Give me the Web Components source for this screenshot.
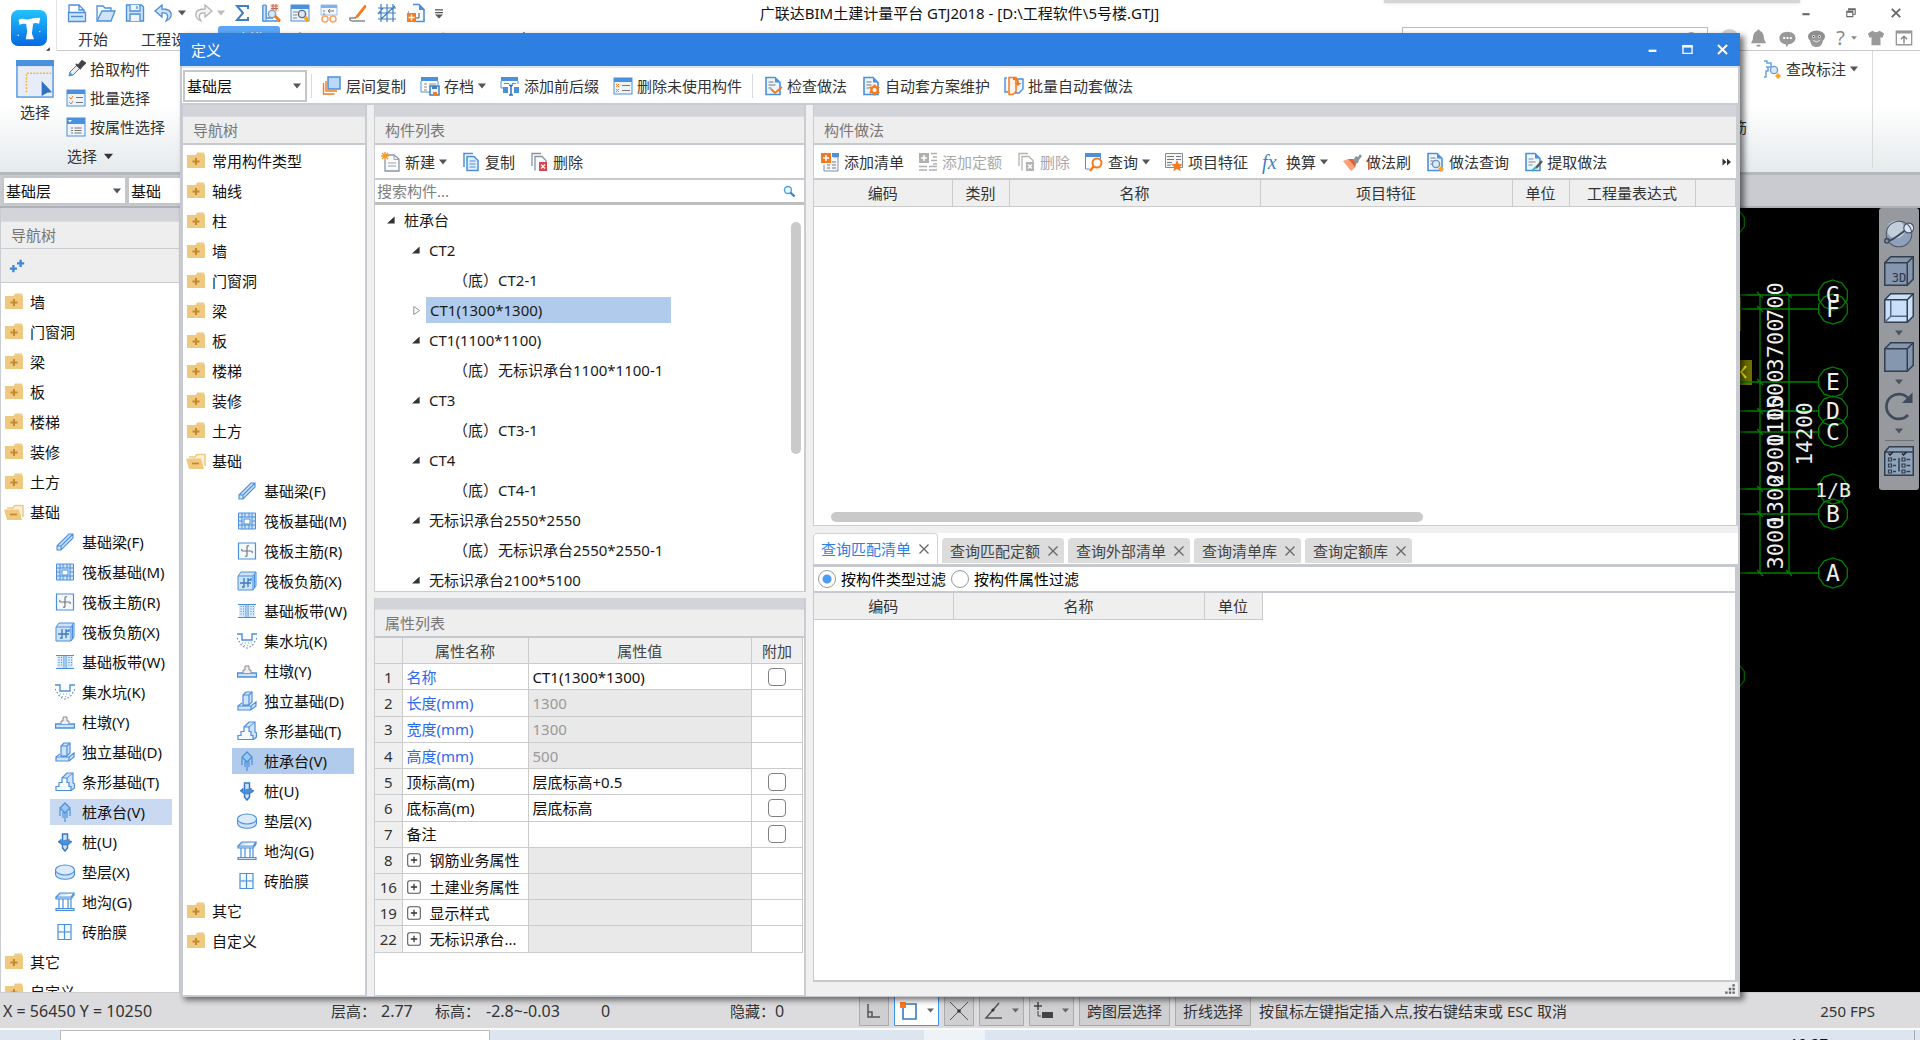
<!DOCTYPE html>
<html lang="zh-CN">
<head>
<meta charset="utf-8">
<title>广联达BIM土建计量平台 GTJ2018</title>
<style>
html,body{margin:0;height:100%;overflow:hidden}
body{font:15px/20px "Noto Sans","Noto Sans CJK SC",sans-serif;color:#1a1a1a;background:#fff}
</style>
</head>
<body>
<gt-app></gt-app>
<script>
const B='#4a90dc', L='#cfe2f8', O='#f47b20';
const doc=`<path d="M3 1.5h9l5 5v12H3z" fill="#eef5fd" stroke="${B}" stroke-width="1.6"/><path d="M12 1.5v5h5z" fill="${B}"/>`;
const win=`<rect x="1" y="2" width="18" height="16" fill="#eef3f9" stroke="${B}"/><rect x="1" y="2" width="18" height="4" fill="${B}"/>`;
const gem=`<path d="M16 14l3 3-3 3-3-3z" fill="#ffa31a"/>`;
const lens=(c,x=11,y=11)=>`<circle cx="${x}" cy="${y}" r="3.6" fill="#dbe9fa" stroke="${c}" stroke-width="1.4"/>`;
const cube=`<path d="M.5 4.500l4-4h15v15l-4 4H.5z" fill="#8497af" stroke="#333d4c" stroke-width="1"/><path d="M.5 4.500h15v15M15.500 4.500l4-4" fill="none" stroke="#333d4c"/>`;
const I={
new:`<path d="M2 9V2h10l5 5v2M12 2v5h5" fill="none" stroke="${B}" stroke-width="1.3"/><path d="M1.5 9.5h17v9h-17z" fill="${L}" stroke="${B}" stroke-width="1.3"/><path d="M4 13.500h12" stroke="${B}" stroke-width="1.4"/>`,
open:`<path d="M1 17V3h6l2 2h6v3" fill="none" stroke="${B}" stroke-width="1.3"/><path d="M1 18L6 8h13l-4 10z" fill="${L}" stroke="${B}" stroke-width="1.3"/>`,
save:`<path d="M1.500 2h15l2 2v14h-17z" fill="${L}" stroke="${B}" stroke-width="1.4"/><path d="M5 2v6h10V2M5 18v-7h10v7M12 3v3" fill="#eef5fd" stroke="${B}" stroke-width="1.3"/>`,
undo:`<path d="M8 2L1 8l7 6v-4c6-1 7 3 4 8 7-3 8-12-4-12z" fill="${L}" stroke="${B}" stroke-width="1.3"/>`,
redo:`<path d="M12 2l7 6-7 6v-4c-6-1-7 3-4 8-7-3-8-12 4-12z" fill="#f4f4f4" stroke="#b4b4b4" stroke-width="1.3"/>`,
sigma:`<path d="M16 6V3H5l6 7-6 7h11v-3" fill="none" stroke="#3f7fc4" stroke-width="2"/>`,
chart:`<path d="M2 2v16h17M5 2v13h7" fill="none" stroke="${B}" stroke-width="1.4"/><path d="M2 2h3v16H2z" fill="${L}" stroke="${B}"/><path d="M9 1h9v8H9z" fill="#fbe3d8"/><path d="M10 3h7M10 5.500h7M12 1v7M15 1v7" stroke="#c46a4c"/>${lens('#7c9cc4',11,11)}<path d="M14 13l5 5" stroke="${O}" stroke-width="3"/>`,
winfind:win+`<path d="M3 9h5M3 12h4M3 15h4" stroke="#888"/>${lens('#667',12,11)}<path d="M15 14l3 4" stroke="#ffa31a" stroke-width="3.500"/>`,
winback:`<path d="M2 2h16v10H2z" fill="#f3f6fa" stroke="#9cc0ea"/><path d="M2 2h16v3H2z" fill="#7fb2ec"/><path d="M4 8h2M4 11h2M15 8h-6m2-2L9 8l2 2" stroke="#777" fill="none"/><circle cx="6" cy="16" r="3" fill="#fff" stroke="#f9a46a" stroke-width="1.600"/><circle cx="14" cy="16" r="3" fill="#fff" stroke="#f9a46a" stroke-width="1.600"/>`,
pen:`<path d="M17 2L9 12l-2 3 3-1L18 4z" fill="${O}" stroke="${O}"/><path d="M8 15H2c-1 2 1 3 3 3h12" fill="none" stroke="#888" stroke-width="1.600"/>`,
grid:`<path d="M4 1v18M10 1v18M16 1v18M1 5h18M1 10h18M1 16h18M4 16L18 3M1 11l5-6" fill="none" stroke="#3f7fc4" stroke-width="1.200"/>`,
docadd:`<path d="M7 1.500h6l5 5v12H8" fill="#f8fafd" stroke="${B}" stroke-width="1.600"/><path d="M13 1v6h6z" fill="${B}"/><path d="M2 9h1M10 15h3v-5" stroke="#555" fill="none"/><path d="M1 10h9v9H1z" fill="${O}"/><path d="M5.500 11.500v6M2.500 14.500h6" stroke="#fff" stroke-width="1.500"/>`,
more:`<path d="M5 6h10M5 9.500h10" stroke="#555" stroke-width="1.500"/><path d="M5 12h10l-5 5z" fill="#555"/>`,
logo:`<defs><linearGradient id="g" x1="0" y1="0" x2="0" y2="1"><stop offset="0" stop-color="#22c3ff"/><stop offset="1" stop-color="#0668e0"/></linearGradient></defs><rect width="20" height="20" rx="4" fill="url(#g)"/><path d="M4.200 5.500C6 4 8 5.500 10 5.200S14 4 16.200 4.500l-.6 3.200c-1.500-.7-2.500-.6-3.300-.2L11.600 13l1.200 3.200H8.200L9 12l-.6-4.300c-1.500-.3-2.800 0-3.600.6z" fill="#fff"/><circle cx="4" cy="14" r=".4" fill="#fff"/><circle cx="16" cy="12" r=".4" fill="#fff"/>`,
selectbig:`<rect x=".5" y=".5" width="19" height="19" fill="#e6ecf8" stroke="${B}" stroke-width=".7"/><rect width="20" height="3.200" fill="${B}"/><path d="M5.500 17V7h13" fill="none" stroke="#f6b52c" stroke-dasharray="1 .7" stroke-width=".8"/><path d="M13.500 11l5.500 6-2.600.200L13.500 19z" fill="#2f6fc4"/>`,
dropper:`<path d="M3 17l1-4 7-7 3 3-7 7z" fill="#e8eef6" stroke="#777"/><path d="M3 17l1-4 3 3z" fill="#4aa3ef"/><path d="M10 5l5 5M12 7l4-5 3 2-5 5z" stroke="#444" stroke-width="2" fill="#444"/>`,
checklist:win+`<path d="M3 9l2 2 2-3M3 14l2 2 2-3" fill="none" stroke="${O}"/><path d="M10 9.500h7M10 14.500h7" stroke="#777"/>`,
proplist:`<rect x="1" y="1" width="18" height="18" fill="#eef3f9" stroke="${B}"/><path d="M1 1h18v6H1z" fill="${B}"/><path d="M2 3h4l-2 2.500z" fill="#fff"/><path d="M5 11h2M5 13.500h2M5 16h2M8.500 11h7M8.500 13.500h7M8.500 16h7" stroke="#777"/>`,
copyfloor:`<path d="M6 1h12v12H6z" fill="#b9d8fb" stroke="${B}" stroke-width="1.500"/><path d="M4 5v10h11M1.500 7v11h11" fill="none" stroke="${O}" stroke-width="1.400"/>`,
archive:`<path d="M1 1h17v4H1z" fill="${B}"/><path d="M1 5v11h9M18 5v4" fill="none" stroke="${B}"/><path d="M4 8h3M4 11h3M4 14h3M9 8h7" stroke="#888"/><path d="M10 10h9v9h-9z" fill="#eef5fd" stroke="#3f7fc4" stroke-width="1.500"/><path d="M12 10h5v3h-5z" fill="#3f7fc4"/><path d="M13 16h4v3h-4z" fill="${O}"/>`,
affix:`<path d="M1 1h17v4H1z" fill="${B}"/><path d="M1 5v7h4M18 5v3" stroke="${B}" fill="none"/><path d="M4 7.500h5M12 7.500h4" stroke="#888"/><path d="M3 11h5v6H3zM14 11h5v6h-5z" fill="${B}"/><path d="M9 9q2 0 2 2v7q0 1-2 1M13 9q-2 0-2 2v7q0 1 2 1" stroke="#2f6fc4" stroke-width="1.500" fill="none"/>`,
unused:win+`<path d="M3 8l3 3m0-3l-3 3M3 13l3 3m0-3l-3 3" stroke="${O}"/><path d="M9 9.500h8M9 14.500h8" stroke="#777"/>`,
doccheck:doc+`<path d="M5.500 6h5M5.500 9h7M5.500 12h3" stroke="#777"/><path d="M8 13l4 4 7-6" fill="none" stroke="${O}" stroke-width="2"/>`,
docgear:doc+`<path d="M5.500 6h5M5.500 9h5M5.500 12h3" stroke="#777"/><circle cx="13.500" cy="14" r="3.200" fill="#fff" stroke="${O}" stroke-width="2.400"/><path d="M13.500 8.500v2M13.500 17.500v2M8.700 11l1.800 1.200M16.500 15.800l1.800 1.200M8.700 17l1.800-1.200M16.500 12.200l1.800-1.200" stroke="${O}" stroke-width="2"/>`,
batch:`<path d="M3 2H1v14h3M12 3h7v10l-4 4h-4" fill="#eef5fd" stroke="${B}" stroke-width="1.400"/><path d="M5 1.500h7v14l-3 3H5z" fill="#fff3ea" stroke="${O}" stroke-width="1.500"/><path d="M9 2c5-1 6 2 6 5h2.500L14 10l-3.500-3H13c0-2-1-3-4-3z" fill="${O}"/>`,
newdoc:`<path d="M5 3h8l5 4v12H4V8" fill="#fafafa" stroke="#8a97a5" stroke-width="1.300"/><path d="M13 3v4.500h5M7 11h8M7 14h8" fill="none" stroke="#9aa5b0"/><path d="M4 0v8M0 4h8M1 1l6 6M7 1L1 7" stroke="#f39a2c" stroke-width="1.400"/>`,
copy:`<path d="M3 15V1.500h9" fill="none" stroke="${B}" stroke-width="1.500"/><path d="M6 4.500h7l4 4v10H6z" fill="#e2eefb" stroke="${B}" stroke-width="1.500"/><path d="M8.500 9h6M8.500 12h6M8.500 15h6" stroke="${B}"/>`,
del:`<path d="M3 14V1.500h9M6 18.500v-14h7l4 4v2" fill="none" stroke="#8493a3" stroke-width="1.300"/><path d="M10 10h8v9h-8z" fill="#d9474b"/><path d="M12 12.500l4 4m0-4l-4 4" stroke="#fff" stroke-width="1.300"/>`,
delg:`<path d="M3 14V1.500h9M6 18.500v-14h7l4 4v2" fill="none" stroke="#b3b3b3" stroke-width="1.300"/><path d="M10 10h8v9h-8z" fill="#b3b3b3"/><path d="M12 12.500l4 4m0-4l-4 4" stroke="#fff" stroke-width="1.300"/>`,
addlist:`<path d="M12 1h7v4h-7z" fill="${B}"/><path d="M13 5h5v14H4v-6" fill="#f4f7fb" stroke="#7d93ac"/><path d="M7 13h3M7 16h3M12 10h4M12 13h4M12 16h4" stroke="#777"/><path d="M1 1h10v10H1z" fill="${O}"/><path d="M6 3v6M3 6h6" stroke="#fff" stroke-width="1.500"/>`,
addgray:`<path d="M1 1h10v10H1z" fill="#b0b0b0"/><path d="M6 3v6M3 6h6" stroke="#fff" stroke-width="1.500"/><path d="M13 1.500h6M15 5h4M13 8.500h6M15 12h4M1 14.500h8M1 18h8M11 14.500h8M11 18h8" stroke="#b0b0b0" stroke-width="1.300"/>`,
query:`<path d="M1 1h16v4H1z" fill="${B}"/><path d="M1.500 5v12h4M16.500 5v2" stroke="${B}" fill="none"/><circle cx="13" cy="11" r="4.500" fill="#fff" stroke="${O}" stroke-width="2"/><path d="M9.500 14.500L6 19" stroke="${O}" stroke-width="2.500"/>`,
feature:`<path d="M1.500 1.500h17v14h-17z" fill="#f4f6f8" stroke="#7e8b98"/><path d="M3 4.500h7M3 7.500h7M3 10.500h5M3 13h4M12 4.500h5M12 7.500h5" stroke="#777"/><path d="M13 8l1.700 4 4.300.300-3.300 2.800 1 4.200L13 17l-3.700 2.300 1-4.200L7 12.300l4.300-.3z" fill="${O}"/>`,
brush:`<path d="M11 8l3-4 2 1 2-3 2 2-3 4-1 3-3 1z" fill="#8c979f"/><path d="M1 9l5-2 8 8-5 4z" fill="#fba07a"/><path d="M6 7l5 0 3 5-1 3z" fill="#e06433"/>`,
docfind:doc+`<path d="M5.500 6h5M5.500 9h3M5.500 12h2" stroke="#777"/>${lens('#6f8fb8',11,12)}`+gem,
docpen:doc+`<path d="M5.500 7h5M5.500 10h7M5.500 13h4" stroke="#888"/><path d="M19 9l-6 7" stroke="#555" stroke-width="2.400"/><path d="M13 15l-4 4" stroke="#31b6c9" stroke-width="2"/>`,
annot:`<path d="M2 2h3v2h4v4H6v4H4v6H2M6 8H4" fill="none" stroke="#6aa3e4" stroke-width="1.500"/>${lens('#7299cc',12,11)}`+gem,
search:`<circle cx="8.500" cy="8.500" r="5" fill="#eaf6fd" stroke="#4ba3dc" stroke-width="2"/><path d="M12 12l6 6" stroke="#2c86c8" stroke-width="3"/>`,
sgray:`<circle cx="9" cy="8" r="6" fill="none" stroke="#aaa" stroke-width="1.500"/>`,
ball:`<circle cx="10" cy="10" r="10" fill="#d2d2d2"/>`,
bell:`<path d="M8.500 2a1.500 1.500 0 013 0c4 1 4 6 4.500 9l2 4H2l2-4c.5-3 .5-8 4.500-9zM8 16.500h4v2H8z" fill="#999"/>`,
chat:`<path d="M10 3c5 0 8.500 3 8.500 6.500S15 16 11 16l-2 3-1-3c-4-.5-6.500-3-6.500-6.500S5 3 10 3z" fill="#999"/><path d="M5.500 9.500h2M9 9.500h2M12.500 9.500h2" stroke="#fff" stroke-width="2"/>`,
face:`<ellipse cx="10" cy="8" rx="9" ry="6.500" fill="#8f8f8f"/><ellipse cx="10" cy="13" rx="6.500" ry="6" fill="#999"/><circle cx="7" cy="8" r="1.600" fill="#e8e8e8"/><circle cx="13" cy="8" r="1.600" fill="#e8e8e8"/><path d="M6.500 12q3.500 3 7 0" stroke="#eee" fill="none"/><circle cx="7" cy="8" r=".7"/><circle cx="13" cy="8" r=".7"/>`,
shirt:`<path d="M6 2q4 3 8 0l5 3-2 5-2-1v9H5V9l-2 1-2-5z" fill="#999"/>`,
expand:`<path d="M1.500 2.500h17v15h-17z" fill="#fff" stroke="#999" stroke-width="1.500"/><path d="M1 2h18v3H1z" fill="#999"/><path d="M10 16V9M6.500 11.500L10 8l3.500 3.500" stroke="#888" stroke-width="1.600" fill="none"/>`,
plus2:`<path d="M6 9v8M2 13h8M14 3v8M10 7h8" stroke="#3f87dc" stroke-width="2.600"/>`,
folder:`<path d="M10 3l1-1.500h7L18.500 3v2H10z" fill="#efcb85"/><path d="M1 4h18v13H1z" fill="#efc980"/><path d="M10 7v7M6.500 10.500h7" stroke="#c48a2c" stroke-width="2"/>`,
folderopen:`<path d="M3 6h6l2-2.500h8V15" fill="#fbf0d8" stroke="#efc980" stroke-width="1.500"/><path d="M0 7.500h15L18 18H3z" fill="#efc980"/><path d="M6 12.500h7" stroke="#c48a2c" stroke-width="1.700"/>`,
beam:`<path d="M2 14L14 2h4v4L6 18H2zM2 14h4v4M6 14L18 2" fill="${L}" stroke="${B}" stroke-width="1.100"/>`,
raft:`<path d="M1.500 2h17v16h-17z" fill="${L}" stroke="${B}"/><path d="M5 2v16M15 2v16M1 6h18M1 14h18M8 2v4M12 2v4M8 14v4M12 14v4M1 10h4M15 10h4" stroke="${B}"/><path d="M7 8h6v5H7z" fill="#fff" stroke="${B}"/>`,
rebar:`<path d="M1.500 2h17v16h-17z" fill="#f3f9ff" stroke="${B}" stroke-width="1.200"/><path d="M12 5q-2-1-2 1v8q0 2-2 1M5 8q-1 2 1 2h8q2 0 1 2" fill="none" stroke="#777" stroke-width="1.200"/>`,
rebarx:`<path d="M1 5l3-4h15v14l-3 4H1z" fill="${L}" stroke="${B}"/><path d="M1.500 5H16v14M16 5l3-4M17.500 3v14" fill="none" stroke="${B}"/><path d="M7 7v9H5M11 7v9M3 12h11M11 9h3v-2" stroke="#3a79c4" fill="none" stroke-width="1.300"/>`,
strip:`<path d="M2 3h7v14H2zM11 3h7v14h-7z" fill="#d6e8fb"/><path d="M1 3.500h18M1 16.500h18M9 3v14M11 3v14" stroke="${B}"/><path d="M4 5v10M6.500 5v10M14 5v10M16.500 5v10" stroke="${B}" stroke-dasharray="1 1.500"/>`,
pit:`<path d="M0 3h5v6h10V3h5" fill="none" stroke="${B}" stroke-width="1.400"/><path d="M0 7l5 8 5 2 5-2 5-8" fill="none" stroke="#5d86b5" stroke-dasharray="1.500 2" stroke-width="1.200"/><path d="M5 12h10M7 14.500h6" stroke="#8ab" stroke-dasharray="1 2"/>`,
pier:`<path d="M.5 12h19v4H.5z" fill="${L}" stroke="${B}" stroke-width="1.300"/><path d="M6 12V9h2V5h4v4h2v3" fill="#eee" stroke="#888"/>`,
found:`<path d="M1 15h13l5-4v4l-5 4H1zM6 14V4l3-3h6v10l-3 3z" fill="${L}" stroke="${B}" stroke-width="1.200"/><path d="M1 15l4-3M6 4h6v10M12 4l3-3M14 15v4" fill="none" stroke="${B}" stroke-width="1.200"/>`,
stripf:`<path d="M7 6l5-5h6v10l1.500 1v4l-4 3" fill="${L}" stroke="${B}" stroke-width="1.200"/><path d="M1 18.500v-4h3v-4h3V6h5v4.500h2v4h2v4z" fill="#f5faff" stroke="${B}" stroke-width="1.200"/><path d="M12 6l6-5" stroke="${B}"/>`,
cap:`<path d="M10 1l5 5-5 5-5-5z" fill="#9cc8f4" stroke="${B}" stroke-width="1.300"/><path d="M5 7v7M15 7v7M8 10v6M12 10v6M10 11v9" stroke="${B}" stroke-width="1.200"/>`,
pile:`<path d="M7.500 2h5v14L10 19l-2.500-3z" fill="${L}" stroke="#3a79c4" stroke-width="1.500"/><path d="M3 9.500q2 3 7 3.500 5-.5 7-3.500l-3-.5v-2M3 9.500L6 9V7" fill="${B}" stroke="#3a79c4"/>`,
pad:`<path d="M.5 8v4c0 7 19 7 19 0V8" fill="${L}" stroke="${B}" stroke-width="1.100"/><ellipse cx="10" cy="8" rx="9.500" ry="5" fill="#dcebfb" stroke="${B}" stroke-width="1.100"/>`,
trench:`<path d="M1 5l4-4h14l-3 4zM1 5v2h15l3-4V1M4 7v10M8 7v10M13 7v10M16 7v10M1 16.500h18v2H1z" fill="${L}" stroke="${B}" stroke-width="1.200"/>`,
brick:`<path d="M3 2.500h13v15H3zM9.500 2.500v15M3 10h13" fill="#f3f9ff" stroke="${B}" stroke-width="1.200"/><path d="M6 10v-1M13 10v-1" stroke="${B}"/>`,
corner:`<path d="M4 3v13h12M4 11h4v5" fill="none" stroke="#555" stroke-width="1.500"/>`,
rect:`<path d="M4 3h13v15H4z" fill="#fff" stroke="#3a79c4" stroke-width="1.600"/><path d="M1 1h6v6H1z" fill="#ff7a1a"/>`,
cross:`<path d="M1 1l18 18M19 1L1 19" stroke="#555"/><circle cx="10" cy="10" r="1.800" fill="#333"/>`,
angle:`<path d="M15 2L2 17h16" fill="none" stroke="#555" stroke-width="1.500"/><circle cx="9" cy="9" r="1.600" fill="#333"/>`,
ptadd:`<path d="M4 1v8M0 5h8" stroke="#444" stroke-width="1.500"/><path d="M4 10v5h3" stroke="#444" fill="none"/><path d="M8 11h11v6H8z" fill="#444"/>`,
planet:`<circle cx="10" cy="10" r="8.500" fill="#8ea1b8"/><circle cx="8" cy="7" r="6" fill="#cfd9e4" opacity=".8"/><path d="M.5 15q2 1 9-4t9-8" fill="none" stroke="#3c4757" stroke-width="1.300"/><circle cx="16.500" cy="6" r="3.300" fill="#dde6ef" stroke="#4c596b" stroke-width=".8"/><circle cx="2" cy="14.500" r="1.500" fill="#8ea1b8" stroke="#3c4757"/><circle cx="10" cy="10" r="8.500" fill="none" stroke="#4c596b" stroke-width=".7"/>`,
cube,
cube3d:cube+`<text x="10" y="17.500" font-size="8" text-anchor="middle" font-family="DejaVu Sans Mono,monospace" fill="#2d3644">3D</text>`,
cubewire:`<path d="M.5 4.500l4-4h15v15l-4 4H.5z" fill="#c9e0fa" stroke="#333d4c"/><path d="M4.500 5v10.500H16M.5 19.500l4-4" fill="none" stroke="#5a6a80"/><path d="M.5 4.500h15v15M15.500 4.500l4-4" fill="none" stroke="#333d4c"/>`,
rotate:`<path d="M17 6A8.300 8.300 0 1016 16" fill="none" stroke="#3f4a5a" stroke-width="1.800"/><path d="M19 1v7h-7z" fill="#3f4a5a"/>`,
panel:`<path d="M.5 4l3-3.500h16v19H.5z" fill="#8fa3bb" stroke="#333d4c"/><path d="M.5 4h19" stroke="#333d4c"/><path d="M10 8v9" stroke="#333d4c"/><path d="M3 8h2v2H3zM3 12h2v2H3zM3 16h2v2H3zM12 8h2v2h-2zM12 12h2v2h-2zM12 16h2v2h-2z" fill="none" stroke="#333d4c" stroke-width=".8"/><path d="M6 9h2M6 13h2M6 17h2M15 9h2.500M15 13h2.500M15 17h2.500" stroke="#333d4c"/><path d="M3 5l1 1 2-2M12 5l1 1 2-2" fill="none" stroke="#222"/>`,
min:`<path d="M4 12h12" stroke="currentColor" stroke-width="3.500"/>`,
max:`<path d="M3 5h14v11H3z" fill="none" stroke="currentColor" stroke-width="2"/><path d="M2 5h16" stroke="currentColor" stroke-width="4"/>`,
restore:`<path d="M6 6V3h11v9h-4M3 7h10v9H3zM3 8.500h10M6 4.500h11" fill="none" stroke="currentColor" stroke-width="1.800"/>`,
close:`<path d="M3 3l14 14M17 3L3 17" stroke="currentColor" stroke-width="3"/>`,
x:`<path d="M1 1l18 18M19 1L1 19" stroke="currentColor" stroke-width="2.600"/>`,
caret:`<path d="M0 4h20L10 16z" fill="currentColor"/>`,
open3:`<path d="M19 1v18H0z" fill="#333"/>`,
shut3:`<path d="M4 1l13 9L4 19z" fill="#fff" stroke="#888" stroke-width="2"/>`,
plusbox:`<rect x="1" y="1" width="18" height="18" rx="3" fill="#fff" stroke="#555" stroke-width="1.500"/><path d="M10 5.500v9M5.500 10h9" stroke="#333" stroke-width="1.800"/>`,
grip:`<path d="M14 2h4v4h-4zM14 8h4v4h-4zM8 8h4v4H8zM14 14h4v4h-4zM8 14h4v4H8zM2 14h4v4H2z" fill="#666"/>`,
chev:`<path d="M1 3l8 7-8 7zM10 3l8 7-8 7z" fill="#333"/>`
};
const def=(n,css,html)=>customElements.define(n,class extends HTMLElement{
 constructor(){super();this.attachShadow({mode:'open'})}
 connectedCallback(){this.shadowRoot.innerHTML=`<style>*{box-sizing:border-box}button,input,select{font:inherit;color:inherit}${css}</style>`+(typeof html==='function'?html(this):html)}
});
const ic=(n,s=20,c='')=>`<gt-icon name="${n}" size="${s}" class="${c}"></gt-icon>`;

def('gt-icon',':host{display:block;flex:none}svg{display:block}',h=>{const s=h.getAttribute('size')||20;
 return `<svg width="${s}" height="${s}" viewBox="0 0 20 20" aria-hidden="true">${I[h.getAttribute('name')]||''}</svg>`});

/* icon + label command button */
def('gt-tool',`:host{display:block;flex:none}button{display:flex;align-items:center;gap:4px;height:26px;padding:0 6px;border:0;background:none;white-space:nowrap}
button:disabled{color:#a9a9a9}.fx{width:20px;font:italic 20px/20px "Liberation Serif",serif;color:#3f7fc4;text-align:left}gt-icon.c{color:#555}`,h=>{const i=h.getAttribute('icon');
 return `<button ${h.hasAttribute('off')?'disabled':''}>${i==='fx'?'<span class="fx">fx</span>':ic(i)}<slot></slot>${h.hasAttribute('caret')?ic('caret',8,'c'):''}</button>`});
def('gt-toolbar',':host{display:flex;align-items:center;gap:2px;background:#fff;overflow:hidden;color:#333}','<slot></slot>');

def('gt-combo',`:host{display:block;position:relative;color:#111}select{appearance:none;width:100%;height:100%;border:2px solid #c3c6ca;border-radius:0;background:#fff;padding:0 2px}
gt-icon{position:absolute;right:6px;top:50%;margin-top:-4px;color:#555;pointer-events:none}`,h=>`<select aria-label="${h.getAttribute('label')}"><option>${h.getAttribute('value')}</option></select>${ic('caret',8)}`);

/* docked panel: drag strip, caption, content */
def('gt-panel',`:host{display:flex;flex-direction:column;min-width:0;min-height:0;background:#fff;border:1px solid #c9ccd1;border-width:0 2px 1px 1px}
.strip{height:11px;background:#d2d4da;flex:none}.cap{height:29px;flex:none;background:#eee;border-top:1px solid #dcdde0;border-bottom:2px solid #c6c9cd;padding:3px 10px;color:#777}`,
h=>`<div class="strip"></div><div class="cap">${h.getAttribute('caption')}</div><slot></slot>`);

const kids=[['beam','基础梁(F)'],['raft','筏板基础(M)'],['rebar','筏板主筋(R)'],['rebarx','筏板负筋(X)'],['strip','基础板带(W)'],['pit','集水坑(K)'],['pier','柱墩(Y)'],['found','独立基础(D)'],['stripf','条形基础(T)'],['cap','桩承台(V)'],['pile','桩(U)'],['pad','垫层(X)'],['trench','地沟(G)'],['brick','砖胎膜']];
def('gt-nav',`:host{display:block;flex:1;min-height:0;overflow:hidden;background:#fff;color:#111}ul{list-style:none;margin:0;padding:1px 0 0;display:flex;flex-direction:column}
.f{display:flex;align-items:center;height:30px;padding-left:3px;gap:6px}.k{display:flex;align-items:center;height:26px;margin:2px 0 2px 49px;width:122px;padding-left:5px;gap:7px;white-space:nowrap}.k.on{background:var(--sel,#b1cbec)}`,
h=>{const all=['常用构件类型','轴线','柱','墙','门窗洞','梁','板','楼梯','装修','土方'];const top=all.slice(+h.getAttribute('from')||0);
const f=(t,i='folder')=>`<li class="f">${ic(i)}<span>${t}</span></li>`;
return `<ul>${top.map(t=>f(t)).join('')}${f('基础','folderopen')}${kids.map(([i,t])=>`<li class="k ${i==='cap'?'on':''}">${ic(i)}<span>${t}</span></li>`).join('')}${f('其它')}${f('自定义')}</ul>`});

def('gt-members',`:host{display:flex;flex-direction:column;flex:1;min-height:0;background:#fff}
.s{display:flex;align-items:center;height:27px;border-top:2px solid #c6c9cd;border-bottom:3px solid #bfbfbf;padding:0 8px 0 0;flex:none}.s input{flex:1;min-width:0;border:0;outline:0;padding:0 2px;height:20px;background:none}input::placeholder{color:#808080;opacity:1}
.l{flex:1;min-height:0;overflow:hidden;display:flex;align-items:flex-start;justify-content:space-between}ul{list-style:none;margin:0;padding:0;flex:1}li{display:flex;align-items:center;height:30px;gap:5px}
.a{padding-left:12px}.b{padding-left:37px}.c{padding-left:74px}li span{height:26px;line-height:26px;padding-left:4px;white-space:nowrap}.on span{background:#b1cbec;width:245px}
.bar{width:10px;height:232px;border-radius:5px;background:#cacaca;margin:17px 3px 0 0}`,()=>{
const r=[['a','桩承台'],['b','CT2'],['c','（底）CT2-1'],['b on','CT1(1300*1300)'],['b','CT1(1100*1100)'],['c','（底）无标识承台1100*1100-1'],['b','CT3'],['c','（底）CT3-1'],['b','CT4'],['c','（底）CT4-1'],['b','无标识承台2550*2550'],['c','（底）无标识承台2550*2550-1'],['b','无标识承台2100*5100']];
return `<label class="s"><input type="text" placeholder="搜索构件..." aria-label="搜索构件">${ic('search',14)}</label><div class="l"><ul>${r.map(([c,t])=>`<li class="${c}">${c==='c'?'':c==='b on'?ic('shut3',9):ic('open3',8)}<span>${t}</span></li>`).join('')}</ul><div class="bar"></div></div>`});

def('gt-props',`:host{display:block;color:#111}table{border-collapse:collapse;table-layout:fixed;width:calc(100% - 1px);height:315px}th,td{border:1px solid #cbcbcb;border-left-width:0;padding:0 4px;font-weight:400;white-space:nowrap;overflow:hidden}
thead th{background:#efefef;color:#444;height:26px;border-top:0}tbody th{background:#efefef;color:#333;text-align:center;padding:0}.h{color:#2c69f0}.g{background:#e9e9e9;color:#999}td:last-child{text-align:center}
input{appearance:none;width:18px;height:18px;border:1px solid #808080;border-radius:4px;margin:0;display:block;margin:0 auto;background:#fff}.e{display:flex;gap:9px;align-items:center}`,()=>{
const r=[[1,'名称','CT1(1300*1300)','h','',1],[2,'长度(mm)','1300','h','g'],[3,'宽度(mm)','1300','h','g'],[4,'高度(mm)','500','h','g'],[5,'顶标高(m)','层底标高+0.5','','',1],[6,'底标高(m)','层底标高','','',1],[7,'备注','','','',1],[8,'钢筋业务属性','','e','g'],[16,'土建业务属性','','e','g'],[19,'显示样式','','e','g'],[22,'无标识承台...','','e','g']];
return `<table><colgroup><col style="width:27px"><col style="width:126px"><col><col style="width:51px"></colgroup><thead><tr><th></th><th>属性名称</th><th>属性值</th><th>附加</th></tr></thead><tbody>${r.map(([n,a,b,c,g,k])=>`<tr><th>${n}</th><td class="${c==='h'?'h':''}">${c==='e'?`<div class="e">${ic('plusbox',14)}<span>${a}</span></div>`:a}</td><td class="${g}">${b}</td><td>${k?`<input type="checkbox" aria-label="${a} 附加">`:''}</td></tr>`).join('')}</tbody></table>`});

def('gt-grid',`:host{display:block;flex:none}table{border-collapse:collapse;table-layout:fixed}:host([fill]) table{width:100%}th{height:26px;background:#efefef;border:1px solid #cbcbcb;border-width:0 1px 1px 0;font-weight:400;color:#333;padding:0}`,
h=>{const c=JSON.parse(h.getAttribute('cols'));const sum=c.reduce((a,b)=>a+(b[1]||0),0);return `<table style="${h.hasAttribute('fill')?'':`width:${sum}px`}"><colgroup>${c.map(x=>`<col ${x[1]?`style="width:${x[1]}px"`:''}>`).join('')}</colgroup><thead><tr>${c.map(x=>`<th>${x[0]}</th>`).join('')}</tr></thead></table>`});

def('gt-query',`:host{display:flex;flex-direction:column;min-height:0;background:#f0f0f0}
.tabs{display:flex;gap:4px;align-items:flex-end;height:31px;background:#fff;flex:none}.tabs button{display:flex;align-items:center;gap:8px;height:25px;border:0;border-radius:4px 4px 0 0;background:#dcdcdc;color:#444;padding:0 6px 0 8px;margin-bottom:1px;white-space:nowrap}
.tabs button.on{height:31px;background:#fff;color:#2c80e6;border:1px solid #d0d3d7;border-bottom:0;padding:0 8px 0 7px;margin:0}.tabs gt-icon{color:#666}
.box{flex:1;min-height:0;background:#fff;border:2px solid #c6cacf;border-top-width:3px;border-left-width:1px;border-right-width:3px}
.r{display:flex;align-items:center;height:26px;border-bottom:2px solid #c6c9cd;padding:0 4px;gap:5px;color:#000}.r label{display:flex;align-items:center;gap:5px}
input{appearance:none;width:18px;height:18px;border:1px solid #999;border-radius:9px;margin:0;background:#fff}input:checked{background:radial-gradient(circle,#4a9cf5 4px,#fff 5px)}`,
()=>`<div class="tabs" role="tablist">${['查询匹配清单','查询匹配定额','查询外部清单','查询清单库','查询定额库'].map((t,i)=>`<button role="tab" class="${i?'':'on'}">${t}${ic('x',10)}</button>`).join('')}</div>
<div class="box"><div class="r"><label><input type="radio" name="f" checked>按构件类型过滤</label><label><input type="radio" name="f">按构件属性过滤</label></div><gt-grid cols='[["编码",139],["名称",251],["单位",58]]'></gt-grid></div>`);

def('gt-dialog',`:host{display:flex;flex-direction:column;background:#f0f0f0;border:solid #c6cad0;border-width:0 2px 1px 2px;box-shadow:4px 3px 6px rgba(0,0,0,.55)}
header{display:flex;align-items:center;height:33px;margin:0 -2px;background:#2d7fe1;color:#fff;padding:0 11px 0 11px;flex:none}header span{flex:1}header button{border:0;background:none;padding:0;margin-left:22px;color:#fff}
.main{height:39px;flex:none;border-top:2px solid #dde6f0;border-bottom:2px solid #c9ccd1;padding-left:1px}gt-combo{width:124px;height:32px}
.sep{width:1px;height:24px;background:#d9d9d9;margin:0 2px}.cols{flex:1;min-height:0;display:grid;grid-template-columns:185px 432px 1fr;gap:7px}
.c2{display:grid;grid-template-rows:11fr 9fr;gap:6px;min-height:0}.c3{display:grid;grid-template-rows:421fr 455fr 14px;min-height:0;min-width:0;row-gap:0}.c3 gt-query{margin-top:7px}
.tb{height:33px;flex:none}.end{margin-left:auto;padding-right:4px}.hb{height:10px;flex:none;border-radius:5px;background:#c9c9c9;width:592px;margin:auto 0 3px 17px}.grip{display:flex;justify-content:flex-end;align-items:center;padding-right:2px}
.g1{border-top:2px solid #c6c9cd}`,
()=>`<header><span>定义</span><button aria-label="最小化">${ic('min',13)}</button><button aria-label="最大化">${ic('max',13)}</button><button aria-label="关闭">${ic('close',13)}</button></header>
<gt-toolbar class="main"><gt-combo label="楼层" value="基础层"></gt-combo><i class="sep"></i><gt-tool icon="copyfloor">层间复制</gt-tool><gt-tool icon="archive" caret>存档</gt-tool><gt-tool icon="affix">添加前后缀</gt-tool><gt-tool icon="unused">删除未使用构件</gt-tool><i class="sep"></i><gt-tool icon="doccheck">检查做法</gt-tool><gt-tool icon="docgear">自动套方案维护</gt-tool><gt-tool icon="batch">批量自动套做法</gt-tool></gt-toolbar>
<div class="cols"><gt-panel caption="导航树"><gt-nav></gt-nav></gt-panel>
<div class="c2"><gt-panel caption="构件列表"><gt-toolbar class="tb"><gt-tool icon="newdoc" caret>新建</gt-tool><gt-tool icon="copy">复制</gt-tool><gt-tool icon="del">删除</gt-tool></gt-toolbar><gt-members></gt-members></gt-panel>
<gt-panel caption="属性列表"><gt-props></gt-props></gt-panel></div>
<div class="c3"><gt-panel caption="构件做法"><gt-toolbar class="tb"><gt-tool icon="addlist">添加清单</gt-tool><gt-tool icon="addgray" off>添加定额</gt-tool><gt-tool icon="delg" off>删除</gt-tool><gt-tool icon="query" caret>查询</gt-tool><gt-tool icon="feature">项目特征</gt-tool><gt-tool icon="fx" caret>换算</gt-tool><gt-tool icon="brush">做法刷</gt-tool><gt-tool icon="docfind">做法查询</gt-tool><gt-tool icon="docpen">提取做法</gt-tool>${ic('chev',10,'end')}</gt-toolbar>
<gt-grid class="g1" fill cols='[["编码",138],["类别",57],["名称",251],["项目特征",252],["单位",57],["工程量表达式",126],["",0]]'></gt-grid><div class="hb"></div></gt-panel>
<gt-query></gt-query><div class="grip">${ic('grip',12)}</div></div></div>`);

/* drawing area with axis grid */
def('gt-canvas',`:host{display:flex;justify-content:flex-end;background:#000;position:relative;min-width:0;overflow:hidden}svg{display:block}text{fill:#eee;font-family:"DejaVu Sans Mono","Liberation Mono",monospace;text-anchor:middle}
.tools{position:absolute;right:1px;top:0;width:40px;height:282px;background:#96999e;border-radius:3px;display:flex;flex-direction:column;align-items:center;padding-top:11px}.tools button{display:block;border:0;background:none;padding:0;margin-bottom:7px}.tools gt-icon.c{color:#4a5360;margin:-1px 0 5px}hr{width:29px;border:0;border-top:1px solid #6f7278;margin:0 0 5px}`,()=>{
const poly=(x,y)=>`<polygon points="${Array.from({length:10},(_,i)=>{const a=(i*36-90)*Math.PI/180;return (x+15*Math.cos(a)).toFixed(1)+','+(y+15*Math.sin(a)).toFixed(1)}).join(' ')}"/>`;
const ax=[['G',87],['F',101],['E',174],['D',203],['C',224],['1/B',281],['B',306],['A',365]];
const dm=[['700',94],['3700',137],['1500',188],['1100',213],['2900',252],['1300',293],['3000',335]];
return `<svg width="180" height="784"><rect y="89" width="1" height="34" fill="#6b6b00"/><rect y="152" width="12" height="25" fill="#6f6f00"/><path d="M6 158l-5 6 5 6" stroke="#ff0" stroke-width="2" fill="none"/>
<g fill="none" stroke="#008000" stroke-width="1.300">${ax.map(a=>`<path d="M0 ${a[1]}h78M17 ${a[1]-3}l6 6${a[0]==='G'||a[0]==='A'?`M46 ${a[1]-3}l6 6`:''}"/>`+poly(93,a[1])).join('')}${poly(-10,14)}${poly(-10,468)}<path d="M20 87v278M49 87v278"/></g>
${ax.map(a=>`<text x="93" y="${a[1]+8}" font-size="${a[0].length>1?20:23}">${a[0]}</text>`).join('')}
${dm.map(d=>`<text font-size="22" x="0" y="0" transform="translate(43 ${d[1]}) rotate(-90)">${d[0]}</text>`).join('')}<text font-size="21" transform="translate(72 226) rotate(-90)">14200</text></svg>
<div class="tools"><button aria-label="动态观察">${ic('planet',30)}</button><button aria-label="三维">${ic('cube3d',30)}</button><button aria-label="线框">${ic('cubewire',30)}</button>${ic('caret',8,'c')}<button aria-label="视图">${ic('cube',30)}</button>${ic('caret',8,'c')}<button aria-label="旋转">${ic('rotate',30)}</button>${ic('caret',8,'c')}<hr><button aria-label="显示设置">${ic('panel',30)}</button></div>`});

def('gt-top',`:host{display:block;background:#fff;color:#333}.w{display:flex;height:51px}.logo{width:57px;padding:10px 0 0 11px;border-right:1px solid #e3e3e3;flex:none;display:flex}.logo .k{align-self:flex-end;color:#777;margin-left:-1px}
.rows{flex:1;min-width:0;display:flex;flex-direction:column;border-bottom:1px solid #c9c9c9}.t{display:grid;grid-template-columns:1fr auto 1fr;height:27px;align-items:center}
.q{display:flex;align-items:center;padding-left:10px;gap:9px}.q button,.sys button,.i button{border:0;background:none;padding:0;display:block}.q .c{color:#555;margin:0 -2px 0 -5px}.q .c.off{color:#bbb}.ttl{margin-left:-58px;color:#111}.sys{display:flex;justify-content:flex-end;gap:33px;padding-right:18px;color:#666}
.m{display:flex;height:24px;align-items:center}.m nav{display:flex;gap:1px;flex:1;height:24px}.m a{color:#333;text-decoration:none;padding:3px 16px 0;height:24px}.m a.on{background:#5ba7f7;color:#fff;border-radius:3px 3px 0 0}nav{padding-left:5px}
.srch{display:flex;width:306px;height:22px;border:1px solid #bbb;align-items:center;margin-right:12px;padding:0 8px 0 6px}.srch input{border:0;outline:0;flex:1;min-width:0;height:18px;padding:0}
.i{display:flex;align-items:center;gap:10px;padding-right:7px;color:#888}.i b{font:400 20px/20px "Noto Sans",sans-serif;margin-right:-4px}
.rb{display:flex;height:121px;background:linear-gradient(#fff 45%,#e5eaec);padding-left:5px}.big{border:0;background:none;display:flex;flex-direction:column;align-items:center;gap:4px;padding:9px 0 0 0;width:60px;height:80px}
.g{display:flex;flex-direction:column}.g gt-tool{height:29px;padding-top:5px;margin-left:-5px}.lbl{display:flex;align-items:center;gap:7px;padding:8px 0 0 2px;color:#333}.rb>.sp{flex:1}.hid{padding:66px 0 0}.an{padding:5px 0 0 9px;width:126px;border-right:1px solid #dadada;height:117px}.end{width:47px}
.shade{position:absolute;top:0;right:120px;width:416px;height:3px;background:#d5d5d5;box-shadow:0 0 3px #ccc}.q .e{margin-left:-4px;color:#555}`,
()=>`<div class="shade"></div><div class="w"><div class="logo">${ic('logo',36)}${ic('open3',4,'k')}</div><div class="rows"><div class="t"><div class="q">${['new','open','save','undo'].map(i=>`<button aria-label="${i}">${ic(i)}</button>`).join('')}${ic('caret',8,'c')}<button aria-label="重做">${ic('redo')}</button>${ic('caret',8,'c off')}${['sigma','chart','winfind','winback','pen','grid','docadd'].map(i=>`<button aria-label="${i}">${ic(i)}</button>`).join('')}${ic('more',16,'e')}</div><div class="ttl">广联达BIM土建计量平台 GTJ2018 - [D:\\工程软件\\5号楼.GTJ]</div><div class="sys"><button aria-label="最小化">${ic('min',12)}</button><button aria-label="还原">${ic('restore',12)}</button><button aria-label="关闭">${ic('close',12)}</button></div></div>
<div class="m"><nav>${['开始','工程设置','建模','视图','工具','工程量','云应用'].map(t=>`<a href="#" class="${t==='建模'?'on':''}">${t}</a>`).join('')}</nav><label class="srch"><input type="text" aria-label="搜索">${ic('sgray',14)}</label><div class="i">${['ball','bell','chat','face'].map(i=>`<button aria-label="${i}">${ic(i,19)}</button>`).join('')}<b>?</b>${ic('caret',6)}<button aria-label="皮肤">${ic('shirt',18)}</button><button aria-label="收起">${ic('expand',18)}</button></div></div></div></div>
<div class="rb"><button class="big">${ic('selectbig',38)}<span>选择</span></button><div class="g"><gt-tool icon="dropper">拾取构件</gt-tool><gt-tool icon="checklist">批量选择</gt-tool><gt-tool icon="proplist">按属性选择</gt-tool><span class="lbl">选择 ${ic('caret',9)}</span></div><div class="sp"></div><div class="hid">钢筋</div><div class="an"><gt-tool icon="annot" caret>查改标注</gt-tool></div><div class="end"></div></div>`);

def('gt-side',`:host{display:flex;flex-direction:column;background:#eee;border:solid #c9ccd1;border-width:0 2px 0 1px;--sel:#c8d9f1;width:181px;flex:none}.s{height:13px;background:#d2d4da;flex:none}.c{height:28px;border-bottom:1px solid #c9ccd1;border-top:1px solid #dcdde0;padding:3px 10px;color:#777;flex:none}.t{height:34px;padding:8px 7px;border-bottom:1px solid #c9ccd1;flex:none}button{display:block;border:0;background:none;padding:0}gt-nav{padding-top:3px}`,
()=>`<div class="s"></div><div class="c">导航树</div><div class="t"><button aria-label="展开">${ic('plus2',18)}</button></div><gt-nav from="3"></gt-nav>`);

def('gt-status',`:host{display:flex;align-items:center;height:36px;background:#dcdcde;border-top:1px solid #cfcfcf;color:#333;padding-left:3px;flex:none}.g{display:grid;grid-template-columns:328px 50px 54px 51px 115px 129px 45px 84px;font-size:16px;white-space:nowrap}.g span{font-size:15px}
button{display:flex;align-items:center;justify-content:center;gap:8px;height:30px;border:1px solid #ababab;background:#cfcfd1;padding:0 7px;margin-right:5px;white-space:nowrap;color:#333}button.i{padding:0 4px}button.on{background:#fff;border-color:#3b97f5}gt-icon{color:#666}.fps{margin-left:auto;padding-right:45px}.h{margin-left:3px}`,
()=>`<div class="g"><div>X = 56450 Y = 10250</div><span>层高：</span><div>2.77</div><span>标高：</span><div>-2.8~-0.03</div><div>0</div><span>隐藏：</span><div>0</div></div>
<button class="i" aria-label="正交">${ic('corner')}</button><button class="i on" aria-label="矩形">${ic('rect')}${ic('caret',7)}</button><button class="i" aria-label="交点">${ic('cross')}</button><button class="i" aria-label="角度">${ic('angle')}${ic('caret',7)}</button><button class="i" aria-label="偏移">${ic('ptadd')}${ic('caret',7)}</button><button>跨图层选择</button><button>折线选择</button><div class="h">按鼠标左键指定插入点,按右键结束或 ESC 取消</div><div class="fps">250 FPS</div>`);

def('gt-taskbar',`:host{display:flex;height:12px;border-top:2px solid #fafafa;background:#dde6f0;overflow:hidden;flex:none;color:#111}.a{width:430px;margin-left:60px;background:#fff;border:1px solid #bbb;border-bottom:0}.b{width:61px;margin-left:434px;background:#eef3f8}.t{margin:3px 0 0 auto;padding-right:86px}.e{width:6px;border-left:1px solid #aaa}`,
'<div class="a"></div><div class="b"></div><div class="t">19:27</div><div class="e"></div>');

def('gt-app',`:host{display:flex;flex-direction:column;height:100vh;position:relative}.cb{display:flex;height:36px;background:#c9cbd1;border-top:3px solid #b4b7bb;padding:1px 2px;flex:none;border-bottom:2px solid #aeb1b6}
.cb gt-combo{height:29px;width:125px}.body{flex:1;display:flex;min-height:0}gt-canvas{flex:1}gt-dialog{position:absolute;inset:33px 180px 43px 180px}`,
`<gt-top></gt-top><div class="cb"><gt-combo label="楼层" value="基础层"></gt-combo><gt-combo label="构件" value="基础"></gt-combo></div><div class="body"><gt-side></gt-side><gt-canvas></gt-canvas></div><gt-status></gt-status><gt-taskbar></gt-taskbar><gt-dialog></gt-dialog>`);
</script>
</body>
</html>
